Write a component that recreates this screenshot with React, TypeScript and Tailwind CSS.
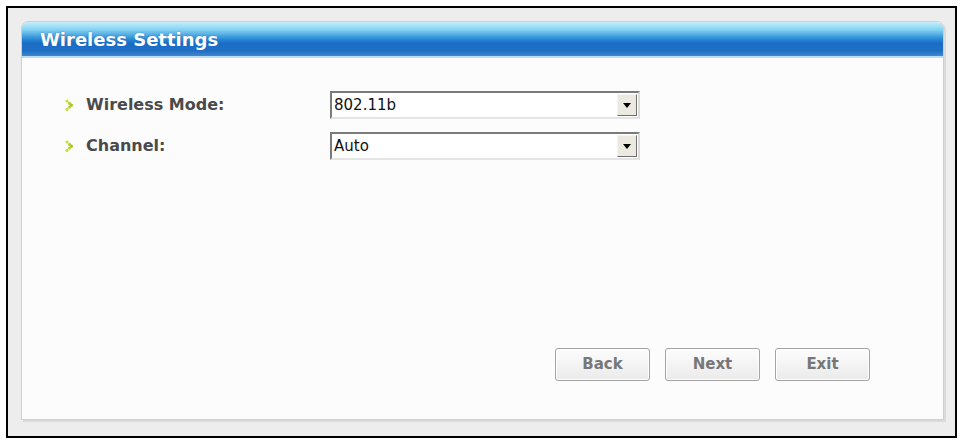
import React from 'react'

function Bullet() {
  return (
    <svg width="8" height="12" viewBox="0 0 8 12" className="mr-[13px] shrink-0">
      <circle cx="2" cy="2" r="1.6" fill="#c8dc3c" />
      <circle cx="4.5" cy="4.3" r="1.6" fill="#b6d232" />
      <circle cx="6.4" cy="6.2" r="1.6" fill="#a4c62a" />
      <circle cx="4.5" cy="8.1" r="1.6" fill="#b6d232" />
      <circle cx="2" cy="10.4" r="1.6" fill="#c8dc3c" />
    </svg>
  )
}

function Select({ value }: { value: string }) {
  return (
    <div className="flex h-[28px] w-[310px] items-center border-2 border-t-[#7a7a7a] border-l-[#7a7a7a] border-r-[#dcdcdc] border-b-[#e4e4e4] bg-white">
      <span className="flex-1 pl-[2px] text-[15px] text-[#111]" style={{ fontFamily: 'Tahoma, "DejaVu Sans", sans-serif' }}>
        {value}
      </span>
      <div className="mr-[1px] flex h-[22px] w-[20px] items-center justify-center border border-t-[#f4f4f4] border-l-[#f4f4f4] border-r-[#6f6f6f] border-b-[#6f6f6f] bg-[#ece9e0]">
        <svg width="8" height="5" viewBox="0 0 8 5">
          <path d="M0 0h8L4 5z" fill="#000" />
        </svg>
      </div>
    </div>
  )
}

function Btn({ label }: { label: string }) {
  return (
    <button className="h-[33px] w-[95px] rounded-[3px] border border-[#a3a3a3] bg-gradient-to-b from-[#fdfdfd] to-[#eaeaea] text-[15px] font-bold text-[#777] shadow-[inset_0_0_0_1px_#fff]">
      {label}
    </button>
  )
}

export default function App() {
  return (
    <div className="h-[440px] w-[962px] overflow-hidden bg-white pl-[6px] pt-[6px]" style={{ fontFamily: '"DejaVu Sans", Verdana, sans-serif' }}>
      <div className="h-[432px] w-[951px] border-2 border-black bg-[#eeedee] pl-[13px] pt-[13px]">
        <div className="flex h-[399px] w-[923px] flex-col rounded-t-[7px] border border-[#cfcfcf] bg-[#fdfcfd] shadow-[2px_2px_0_#dadada]">
          <div className="flex h-[36px] items-center rounded-t-[6px] border-b-2 border-[#b9dcf2] bg-[linear-gradient(to_bottom,#c6eefb_0%,#86d4f3_22%,#2f8fd8_48%,#1a6cc6_62%,#1f6fc4_85%,#3f86cf_100%)] pl-[18px]">
            <span className="text-[18px] font-bold text-white [text-shadow:0_0_1px_#1a5fa8]">
              Wireless Settings
            </span>
          </div>

          <div className="flex flex-col gap-[13px] pl-[43px] pt-[33px]">
            <div className="flex items-center">
              <div className="flex w-[265px] items-center">
                <Bullet />
                <span className="text-[16px] font-bold text-[#4a4a4a]">Wireless Mode:</span>
              </div>
              <Select value="802.11b" />
            </div>
            <div className="flex items-center">
              <div className="flex w-[265px] items-center">
                <Bullet />
                <span className="text-[16px] font-bold text-[#4a4a4a]">Channel:</span>
              </div>
              <Select value="Auto" />
            </div>
          </div>

          <div className="mt-auto mb-[38px] flex gap-[15px] pl-[533px]">
            <Btn label="Back" />
            <Btn label="Next" />
            <Btn label="Exit" />
          </div>
        </div>
      </div>
    </div>
  )
}
